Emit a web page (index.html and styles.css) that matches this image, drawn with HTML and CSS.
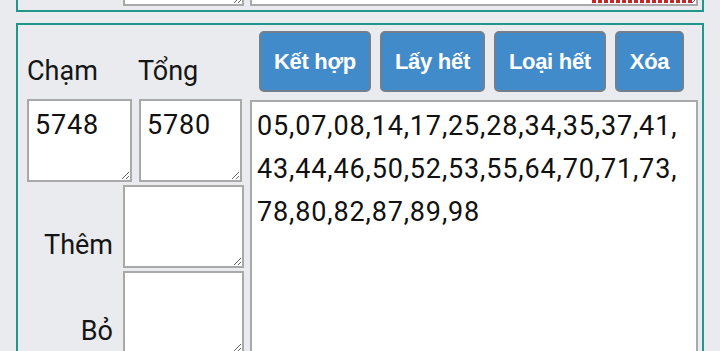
FILE: index.html
```html
<!DOCTYPE html>
<html lang="vi">
<head>
    <meta charset="UTF-8">
    <title>ghep dan</title>
    <link rel="stylesheet" href="styles.css">
</head>
<body>
    <div class="page">
        <section class="panel prev">
            <div class="col-left">
                <textarea class="box side"></textarea>
            </div>
            <div class="col-right">
                <textarea class="box tall"></textarea>
                <span class="spell"></span>
            </div>
        </section>

        <section class="panel main">
            <div class="head-left">
                <span class="label first">Chạm</span>
                <span class="label">Tổng</span>
            </div>
            <div class="buttons">
                <button class="btn">Kết hợp</button>
                <button class="btn">Lấy hết</button>
                <button class="btn">Loại hết</button>
                <button class="btn">Xóa</button>
            </div>
            <div class="fields">
                <div class="row">
                    <textarea class="box cham">5748</textarea>
                    <textarea class="box tong">5780</textarea>
                </div>
                <div class="row end">
                    <span class="label">Thêm</span>
                    <textarea class="box side"></textarea>
                </div>
                <div class="row end">
                    <span class="label">Bỏ</span>
                    <textarea class="box side"></textarea>
                </div>
            </div>
            <textarea class="box result">05,07,08,14,17,25,28,34,35,37,41,43,44,46,50,52,53,55,64,70,71,73,78,80,82,87,89,98</textarea>
        </section>
    </div>
</body>
</html>
```

FILE: styles.css
```css
body {
    margin: 0;
    background: #e9ebee;
    font-family: Roboto, "Noto Sans", sans-serif;
    color: #151515;
    overflow: hidden;
}
.page {
    padding: 0 16px;
}
.panel {
    border: 2px solid #21968a;
    display: grid;
    grid-template-columns: 217px 448px;
    column-gap: 6px;
    row-gap: 8px;
    padding: 6px 0 0 9px;
}
.panel.prev {
    margin-top: -82px;
    padding-bottom: 4px;
    height: 80px;
}
.panel.main {
    margin-top: 11px;
    height: 400px;
    align-content: start;
}
.col-left {
    display: flex;
    justify-content: flex-end;
}
.col-right {
    position: relative;
    display: flex;
}
.spell {
    position: absolute;
    right: 5px;
    bottom: 3px;
    width: 101px;
    height: 3px;
    background: repeating-linear-gradient(90deg, #c62828 0 4px, transparent 4px 6px);
}

.box {
    box-sizing: border-box;
    margin: 0;
    border: 2px solid #a9a9a9;
    background: #fff;
    font-family: Roboto, "Noto Sans", sans-serif;
    font-size: 27px;
    letter-spacing: 0.85px;
    line-height: 43px;
    color: #111;
    padding: 3px 6px;
    overflow: hidden;
}
.box.side {
    width: 121px;
    height: 83px;
}
.prev .box {
    height: 80px;
}
.prev .box.tall {
    width: 448px;
}

.head-left {
    display: flex;
    align-items: flex-end;
    padding-bottom: 5px;
}
.label {
    font-size: 27px;
    line-height: 32px;
}
.label.first {
    width: 111px;
}

.buttons {
    display: flex;
    gap: 9px;
    padding-left: 9px;
}
.btn {
    box-sizing: border-box;
    height: 61px;
    padding: 0 13px;
    border: 2px solid #72808e;
    border-radius: 5px;
    background: #428bca;
    color: #fff;
    font-family: "Liberation Sans", Arial, sans-serif;
    font-weight: bold;
    font-size: 22px;
    letter-spacing: -0.3px;
}

.fields {
    display: flex;
    flex-direction: column;
    gap: 3px;
    margin-top: -1px;
}
.row {
    display: flex;
    gap: 7px;
}
.row.end {
    justify-content: flex-end;
    align-items: flex-end;
    gap: 10px;
}
.row.end .label {
    padding-bottom: 7px;
}
.box.cham {
    width: 105px;
    height: 83px;
}
.box.tong {
    width: 103px;
    height: 83px;
}
.box.result {
    width: 448px;
    height: 270px;
    padding: 3px 12px 3px 5px;
}
```
